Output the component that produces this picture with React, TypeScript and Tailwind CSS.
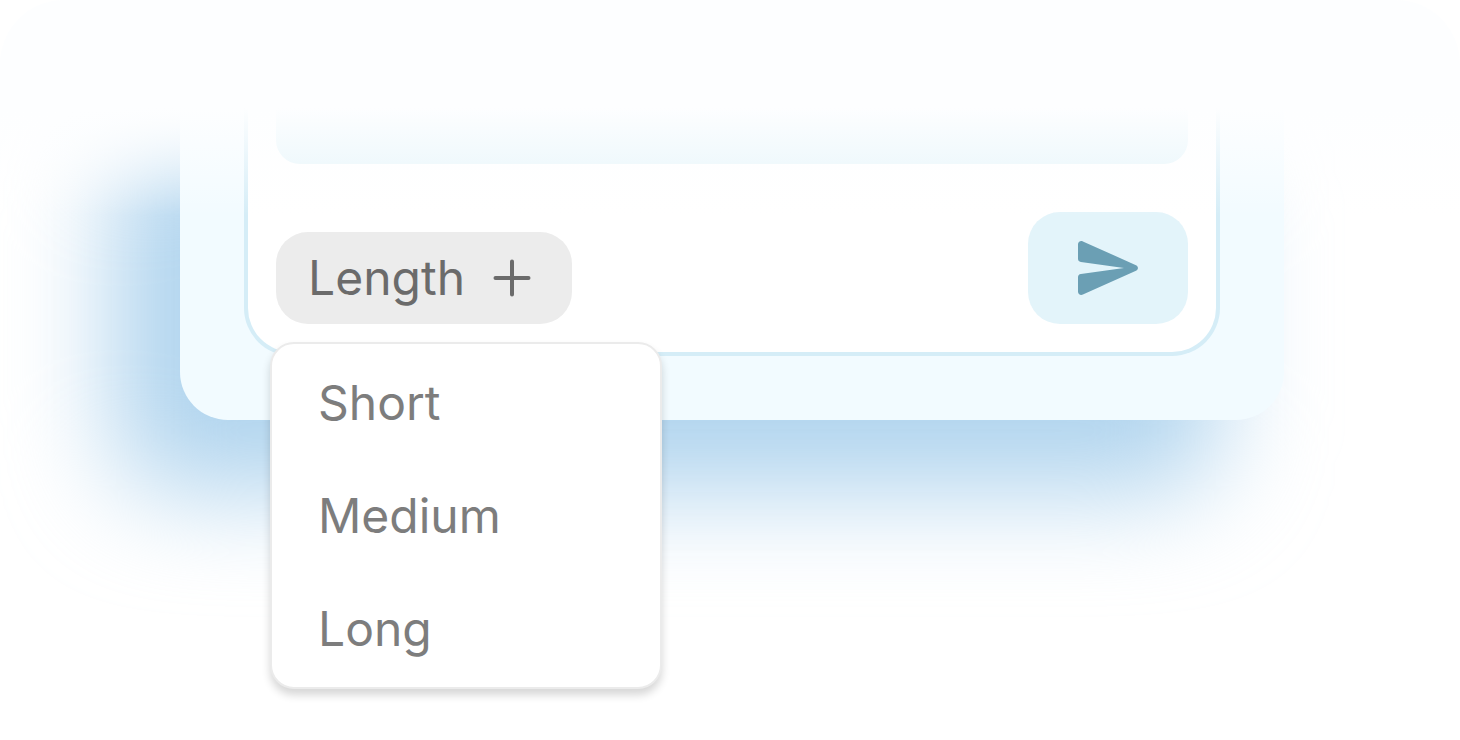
import React, { useState } from 'react';

const LENGTHS = ['Short', 'Medium', 'Long'];

function PlusIcon() {
  return (
    <svg
      className="h-10 w-10 shrink-0"
      viewBox="0 0 40 40"
      fill="none"
      stroke="currentColor"
      strokeWidth="4"
      strokeLinecap="round"
      aria-hidden="true"
    >
      <path d="M20 3.5v33M3.5 20h33" />
    </svg>
  );
}

function SendIcon() {
  return (
    <svg
      className="h-14 w-16"
      viewBox="0 0 64 56"
      fill="currentColor"
      aria-hidden="true"
    >
      <path d="M2 4.6C2 1.8 4.4.4 6.9 1.4L60 25.2C62.6 26.4 62.6 29.6 60 30.8L6.9 54.6C4.4 55.6 2 54.2 2 51.4V37.2C2 35.4 3.1 34.2 4.9 34L48 28L4.9 22C3.1 21.8 2 20.6 2 18.8Z" />
    </svg>
  );
}

export default function App() {
  const [length, setLength] = useState('');
  const [open, setOpen] = useState(true);

  return (
    <div className="relative min-h-screen overflow-hidden bg-white font-['Inter','Liberation_Sans',sans-serif]">
      <div className="relative isolate ml-[180px] mr-44">
        {/* glow behind the card */}
        <div className="absolute -bottom-[72px] -left-[68px] right-16 top-36 -z-10 rounded-[64px] bg-[#b0d4ee] blur-[52px]" />

        <div className="rounded-b-[48px] bg-[#f2fbff] px-16 pb-16">
          <form
            className="rounded-b-[48px] border-4 border-t-0 border-[#d5edf7] bg-white px-7 pb-7"
            onSubmit={(e) => e.preventDefault()}
          >
            <textarea
              aria-label="Message"
              className="block h-[164px] w-full resize-none rounded-b-3xl bg-[#e3f4fa] p-8 text-5xl text-[#6b6b6b] outline-none"
            />

            <div className="mt-12 flex items-end justify-between">
              <div className="relative">
                <button
                  type="button"
                  aria-expanded={open}
                  onClick={() => setOpen(!open)}
                  className="flex h-[92px] w-[296px] items-center justify-between rounded-[32px] bg-[#ececec] pl-8 pr-10 text-5xl text-[#6b6b6b]"
                >
                  Length
                  <PlusIcon />
                </button>

                {open && (
                  <ul className="absolute -left-[6px] top-[110px] z-20 w-[392px] rounded-3xl border-2 border-[#ebebeb] bg-white py-0.5 shadow-[0_6px_8px_rgba(0,0,0,0.16)]">
                    {LENGTHS.map((item) => (
                      <li key={item}>
                        <button
                          type="button"
                          aria-pressed={length === item}
                          onClick={() => setLength(item)}
                          className="flex h-[113px] w-full items-center px-[46px] text-5xl text-[#7d7d7d]"
                        >
                          {item}
                        </button>
                      </li>
                    ))}
                  </ul>
                )}
              </div>

              <button
                type="submit"
                aria-label="Send"
                className="flex h-28 w-40 items-center justify-center rounded-[32px] bg-[#e3f4fa] text-[#6b9fb4]"
              >
                <SendIcon />
              </button>
            </div>
          </form>
        </div>
      </div>

      {/* fades the top of the card out */}
      <div className="pointer-events-none absolute inset-x-0 top-0 h-[216px] rounded-t-[64px] bg-linear-to-b from-[#fdfeff] from-50% to-[#fdfeff]/0" />
    </div>
  );
}
